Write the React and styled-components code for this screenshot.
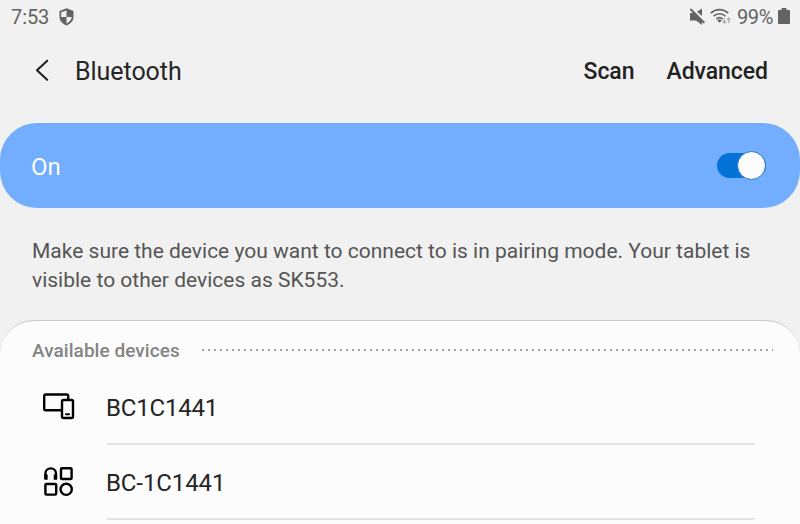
import React from "react";
import styled, { createGlobalStyle } from "styled-components";

const GlobalStyle = createGlobalStyle`
  * { box-sizing: border-box; }
  html, body { margin: 0; height: 524px; overflow: hidden; background: #f1f1f1; }
  body { font-family: Roboto, sans-serif; color: #252525; }
  svg { display: block; flex: none; }
`;

const Screen = styled.main`
  width: 800px;
  height: 524px;
  overflow: hidden;
  display: flex;
  flex-direction: column;
  background: #f1f1f1;
`;

const StatusBar = styled.div`
  height: 34px;
  flex: none;
  display: flex;
  align-items: center;
  justify-content: space-between;
  padding: 0 10px 0 11px;
  color: #636363;
  font-size: 20px;
  line-height: 34px;
`;

const StatusGroup = styled.div`
  display: flex;
  align-items: center;
`;

const Clock = styled.span`
  width: 48px;
  letter-spacing: -0.1px;
`;

const BatteryLevel = styled.span`
  width: 41px;
  margin-left: 5px;
  white-space: nowrap;
  letter-spacing: -0.4px;
`;

const Header = styled.header`
  height: 89px;
  flex: none;
  display: flex;
  align-items: flex-start;
  padding: 20px 32px 0 34px;
  line-height: 36px;
`;

const BackButton = styled.button`
  border: 0;
  padding: 0;
  width: 41px;
  height: 34px;
  background: none;
  color: #222;
`;

const Title = styled.h1`
  margin: 0;
  flex: 1;
  font-size: 25px;
  font-weight: 400;
  letter-spacing: -0.05px;
`;

const Action = styled.button`
  border: 0;
  padding: 0;
  margin-left: 32px;
  background: none;
  color: #222;
  font: 500 23px/36px Roboto, sans-serif;
  letter-spacing: -0.05px;
`;

const PowerBanner = styled.section`
  height: 85px;
  flex: none;
  display: flex;
  align-items: center;
  justify-content: space-between;
  padding: 0 34px 0 31px;
  border-radius: 37px;
  background: #72adfe;
  color: #fafcff;
  font-size: 24px;
`;

const PowerLabel = styled.span`
  padding-top: 3px;
`;

const Switch = styled.button`
  width: 49px;
  height: 25px;
  border: 0;
  border-radius: 13px;
  padding: 0;
  display: flex;
  align-items: center;
  justify-content: flex-end;
  background: #0472d6;
`;

const Knob = styled.span`
  width: 29px;
  height: 29px;
  flex: none;
  border: 1px solid #2476c5;
  border-radius: 50%;
  background: #fcfcfc;
`;

const Notice = styled.p`
  height: 112px;
  flex: none;
  margin: 0;
  padding: 29px 32px 0;
  color: #555;
  font-size: 21px;
  line-height: 29px;
  white-space: nowrap;
`;

const NoticeLine = styled.span`
  display: block;
`;

const DevicePanel = styled.section`
  height: 260px;
  flex: none;
  border-top: 1px solid #c8c8c8;
  border-radius: 34px 34px 0 0;
  background: #fcfcfc;
`;

const SectionHeader = styled.div`
  height: 49px;
  display: flex;
  align-items: center;
  padding: 10px 27px 0 32px;
`;

const SectionTitle = styled.h2`
  margin: 0;
  width: 170px;
  color: #848484;
  font-size: 19px;
  line-height: 24px;
  font-weight: 500;
  letter-spacing: 0.05px;
`;

const DottedRule = styled.div`
  flex: 1;
  height: 2px;
  margin-top: -2px;
  background: repeating-linear-gradient(90deg, #a0a0a0 0 2px, transparent 2px 6px);
`;

const DeviceList = styled.ul`
  margin: 0;
  padding: 0 45px 0 42px;
  list-style: none;
`;

const DeviceRow = styled.li`
  height: 75px;
  display: flex;
`;

const DeviceIcon = styled.span`
  width: 65px;
  padding-top: 22px;
`;

const DeviceName = styled.span`
  flex: 1;
  border-bottom: 2px solid #e3e3e3;
  color: #252525;
  font-size: 24px;
  line-height: 77px;
  text-indent: -1px;
  letter-spacing: ${({ $tracking }) => $tracking}px;
`;

const ShieldIcon = () => (
  <svg width="15" height="18" viewBox="0 0 15 18">
    <path d="M7.5.3 14.5 3v6.1c0 3.7-2.9 7.1-7 8.3-4.1-1.2-7-4.6-7-8.3V3z" fill="#636363" />
    <path d="M7.5 2.4v6.7H2.2V4.3zM7.5 9.1h5.2c-.2 2.9-2.2 5.2-5.2 6.3z" fill="#f1f1f1" />
  </svg>
);

const MutedIcon = () => (
  <svg width="21" height="18" viewBox="0 0 21 18">
    <path d="M1 5h3.5L13 13v4l-6-4.5H1zM8 3.8 13 .5V8z" fill="#636363" />
    <path d="m1.4 1 14 14" stroke="#636363" strokeWidth="1.8" />
  </svg>
);

const WifiIcon = () => (
  <svg width="22" height="18" viewBox="0 0 22 18">
    <g fill="none" stroke="#636363" strokeWidth="1.7">
      <path d="M.8 5.2c5-4.8 12.4-4.8 17.4 0M3.6 8.2c3.5-3.3 8.3-3.3 11.8 0M6.4 11c1.9-1.7 4.3-1.7 6.2 0" />
    </g>
    <path d="m7.2 12.2 2.3-1 2.3 1-2.3 2.6z" fill="#636363" />
    <path d="M14.3 10v5m-1.7-1.8 1.7 2 1.7-2M18.7 15v-5M17 11.8l1.7-2 1.7 2" fill="none" stroke="#aaa" strokeWidth="1.1" />
  </svg>
);

const BatteryIcon = () => (
  <svg width="12" height="18" viewBox="0 0 12 18">
    <path d="M3.5 0h5v2H11a1 1 0 0 1 1 1v12a1 1 0 0 1-1 1H1a1 1 0 0 1-1-1V3a1 1 0 0 1 1-1h2.5z" fill="#636363" />
  </svg>
);

const BackIcon = () => (
  <svg width="16" height="34" viewBox="0 0 16 34">
    <path d="M13.2 6.7 3 16.2l10.2 9.5" fill="none" stroke="currentColor" strokeWidth="2.1" strokeLinecap="round" strokeLinejoin="round" />
  </svg>
);

const ScreensIcon = () => (
  <svg width="34" height="32" viewBox="0 0 34 32" fill="none" stroke="#000" strokeWidth="2.4">
    <path d="M19.5 18.3H3.7A1.5 1.5 0 0 1 2.2 16.8V4A1.5 1.5 0 0 1 3.7 2.5h21A1.5 1.5 0 0 1 26.2 4v3.5" />
    <rect x="20" y="8" width="11" height="18" rx="1.5" />
    <path d="M24 22.3h3" strokeLinecap="round" strokeWidth="2" />
  </svg>
);

const AccessoriesIcon = () => (
  <svg width="34" height="32" viewBox="0 0 34 32" fill="none" stroke="#000" strokeWidth="2.4">
    <path d="M3.4 12V6.7a5.2 5.2 0 0 1 10.6 0V12" />
    <path d="M4 7.5v5.2M13.4 7.5v5.2" strokeWidth="3.3" />
    <rect x="19" y="1.2" width="10.6" height="10.8" rx="1" />
    <rect x="3.4" y="17" width="10.8" height="10.6" rx="1" />
    <circle cx="24.2" cy="22.3" r="5.6" />
  </svg>
);

const devices = [
  { name: "BC1C1441", icon: ScreensIcon, tracking: -0.2 },
  { name: "BC-1C1441", icon: AccessoriesIcon, tracking: -0.1 },
];

export default function App() {
  return (
    <>
      <GlobalStyle />
      <Screen>
        <StatusBar>
          <StatusGroup>
            <Clock>7:53</Clock>
            <ShieldIcon />
          </StatusGroup>
          <StatusGroup>
            <MutedIcon />
            <WifiIcon />
            <BatteryLevel>99%</BatteryLevel>
            <BatteryIcon />
          </StatusGroup>
        </StatusBar>
        <Header>
          <BackButton aria-label="Back"><BackIcon /></BackButton>
          <Title>Bluetooth</Title>
          <Action>Scan</Action>
          <Action>Advanced</Action>
        </Header>
        <PowerBanner>
          <PowerLabel>On</PowerLabel>
          <Switch role="switch" aria-checked="true" aria-label="Bluetooth"><Knob /></Switch>
        </PowerBanner>
        <Notice>
          <NoticeLine>Make sure the device you want to connect to is in pairing mode. Your tablet is</NoticeLine>
          <NoticeLine>visible to other devices as SK553.</NoticeLine>
        </Notice>
        <DevicePanel>
          <SectionHeader>
            <SectionTitle>Available devices</SectionTitle>
            <DottedRule />
          </SectionHeader>
          <DeviceList>
            {devices.map(({ name, icon: Icon, tracking }) => (
              <DeviceRow key={name}>
                <DeviceIcon><Icon /></DeviceIcon>
                <DeviceName $tracking={tracking}>{name}</DeviceName>
              </DeviceRow>
            ))}
          </DeviceList>
        </DevicePanel>
      </Screen>
    </>
  );
}
